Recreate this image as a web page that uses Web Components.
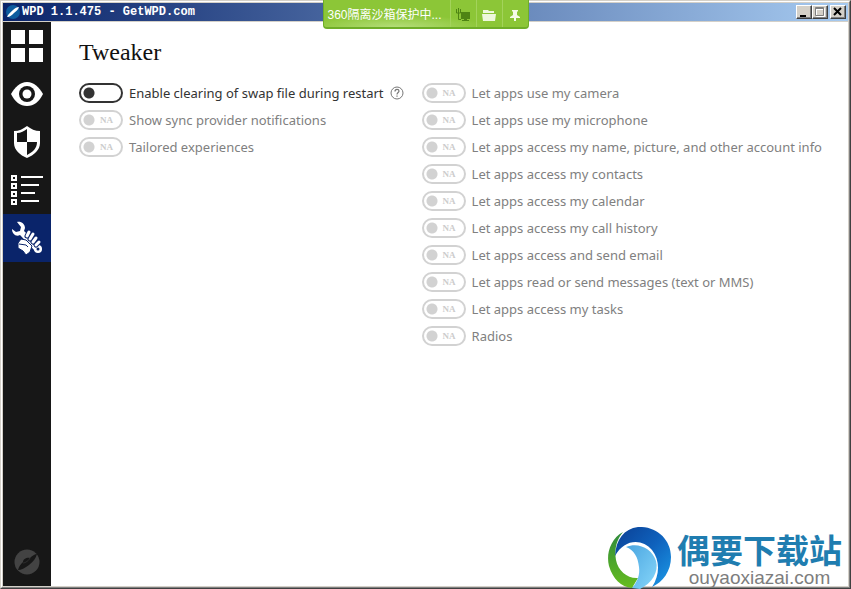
<!DOCTYPE html>
<html lang="en">
<head>
<meta charset="utf-8">
<title>WPD 1.1.475 - GetWPD.com</title>
<style>
  html, body {
    height: 100%;
    margin: 0;
  }
  body {
    font-family: "Noto Sans", "Noto Sans CJK SC", sans-serif;
    font-size: 13px;
    overflow: hidden;
  }
</style>
</head>
<body>

<wpd-window>
  <title-bar slot="title">WPD 1.1.475 - GetWPD.com</title-bar>
  <sandbox-badge slot="badge">360隔离沙箱保护中...</sandbox-badge>
  <nav-rail slot="nav"></nav-rail>
  <tweaker-page>
    <tweak-toggle slot="system" help>Enable clearing of swap file during restart</tweak-toggle>
    <tweak-toggle slot="system" disabled>Show sync provider notifications</tweak-toggle>
    <tweak-toggle slot="system" disabled>Tailored experiences</tweak-toggle>

    <tweak-toggle slot="apps" disabled>Let apps use my camera</tweak-toggle>
    <tweak-toggle slot="apps" disabled>Let apps use my microphone</tweak-toggle>
    <tweak-toggle slot="apps" disabled>Let apps access my name, picture, and other account info</tweak-toggle>
    <tweak-toggle slot="apps" disabled>Let apps access my contacts</tweak-toggle>
    <tweak-toggle slot="apps" disabled>Let apps access my calendar</tweak-toggle>
    <tweak-toggle slot="apps" disabled>Let apps access my call history</tweak-toggle>
    <tweak-toggle slot="apps" disabled>Let apps access and send email</tweak-toggle>
    <tweak-toggle slot="apps" disabled>Let apps read or send messages (text or MMS)</tweak-toggle>
    <tweak-toggle slot="apps" disabled>Let apps access my tasks</tweak-toggle>
    <tweak-toggle slot="apps" disabled>Radios</tweak-toggle>
  </tweaker-page>
  <site-mark slot="mark"></site-mark>
</wpd-window>

<script>
// small helper, every element clones its own template
function attach(host, html) {
  const template = document.createElement('template');
  template.innerHTML = html;
  const root = host.attachShadow({ mode: 'open' });
  root.append(template.content.cloneNode(true));
  return root;
}

/* WINDOW FRAME */
class WpdWindow extends HTMLElement {
  constructor() {
    super();
    attach(this, /*html*/`
      <style>
        :host {
          display: block;
          position: relative;
          height: 100%;
          box-sizing: border-box;
          border: 1px solid;
          border-color: #d4d0c8 #404040 #404040 #d4d0c8;
        }
        .frame {
          display: flex;
          flex-direction: column;
          height: 100%;
          box-sizing: border-box;
          padding: 1px;
          background: #d4d0c8;
          border: 1px solid;
          border-color: #fff #808080 #808080 #fff;
        }
        .body {
          flex: 1;
          display: flex;
          min-height: 0;
          margin-top: 1px;
          background: #fff;
        }
      </style>
      <div class="frame">
        <slot name="title"></slot>
        <div class="body">
          <slot name="nav"></slot>
          <slot></slot>
        </div>
      </div>
      <slot name="badge"></slot>
      <slot name="mark"></slot>
    `);
  }
}

/* TITLE BAR */
class TitleBar extends HTMLElement {
  constructor() {
    super();
    attach(this, /*html*/`
      <style>
        :host {
          display: flex;
          align-items: center;
          height: 18px;
          padding: 0 2px 0 3px;
          background: linear-gradient(to right, #0a246a, #a6caf0);
          color: #fff;
          font: bold 12px/18px "Liberation Mono", monospace;
        }
        .logo {
          width: 14px;
          height: 16px;
          margin-right: 2px;
        }
        .text {
          flex: 1;
          white-space: nowrap;
        }
        button {
          width: 16px;
          height: 14px;
          padding: 0;
          background: #d4d0c8;
          border: 1px solid;
          border-color: #fff #404040 #404040 #fff;
          box-shadow: inset -1px -1px #808080;
        }
        button svg {
          display: block;
        }
        .close {
          margin-left: 2px;
        }
      </style>
      <svg class="logo" viewBox="0 0 14 16">
        <circle cx="7" cy="8" r="7" fill="#0d5c9e"/>
        <path d="M1 13C2 10 5 8 7 6c2-2 4-3 6-3-1 3-3 4-5 6-2 2-4 4-7 4z" fill="#fff"/>
      </svg>
      <span class="text"><slot></slot></span>
      <button aria-label="Minimize"><svg width="14" height="12"><path d="M3 9h6v2H3z"/></svg></button>
      <button aria-label="Maximize" disabled><svg width="14" height="12" fill="none"><path d="M3.500 2.500h8v8h-8zM3 3.500h9" stroke="#fff"/><path d="M2.500 1.500h8v8h-8zM2 2.500h9" stroke="#808080"/></svg></button>
      <button class="close" aria-label="Close"><svg width="14" height="12"><path d="M3 2l7 7M10 2L3 9" stroke="#000" stroke-width="2"/></svg></button>
    `);
  }
}

/* SANDBOX BADGE, sits over the title bar */
class SandboxBadge extends HTMLElement {
  constructor() {
    super();
    attach(this, /*html*/`
      <style>
        :host {
          position: absolute;
          top: -1px;
          left: 50%;
          transform: translateX(-50%);
          display: flex;
          height: 29px;
          box-sizing: border-box;
          border: 1px solid #6fae28;
          border-top: 0;
          border-bottom-width: 2px;
          border-radius: 0 0 4px 4px;
          background: radial-gradient(ellipse 90px 12px at 35% 100%, #b4dd78, #8cc637);
          color: #fff;
          font: 12px/30px "Liberation Sans", "Noto Sans CJK SC", sans-serif;
          overflow: hidden;
        }
        .text {
          width: 122px;
          padding-left: 4px;
          white-space: nowrap;
        }
        button {
          display: grid;
          place-items: center;
          width: 26px;
          padding: 2px 0 0;
          border: 0;
          border-left: 1px solid #a3d35b;
          background: none;
        }
      </style>
      <span class="text"><slot></slot></span>
      <button aria-label="Desktop"><svg width="14" height="14" fill="#4e8413"><path d="M5 4h9v7H5zM8 11h3v1h2v1H6v-1h2z"/><path d="M.5 1v4h4V1M2.500 0v11.500H5" fill="none" stroke="#4e8413"/></svg></button>
      <button aria-label="Folder"><svg width="14" height="14" fill="#eef8dc"><path d="M1 2h5l1 1h5v2H1zM0 6h14l-1 7H1z"/></svg></button>
      <button aria-label="Pin"><svg width="12" height="14" fill="#f4fbe8"><path d="M3 2h6v1L8 4v3l3 2v1H7v3H5v-3H1V9l3-2V4L3 3z"/></svg></button>
    `);
  }
}

/* NAVIGATION */
class NavRail extends HTMLElement {
  constructor() {
    super();
    attach(this, /*html*/`
      <style>
        :host {
          display: block;
          flex: none;
          background: #171717;
        }
        nav {
          display: flex;
          flex-direction: column;
          height: 100%;
        }
        button {
          width: 48px;
          height: 48px;
          padding: 0;
          border: 0;
          background: none;
          color: #fff;
        }
        button.active {
          background: #0a246a;
        }
        button.about {
          margin-top: auto;
        }
        svg {
          display: block;
          width: 48px;
          height: 48px;
          fill: currentColor;
        }
      </style>
      <nav>
        <button aria-label="Dashboard">
          <svg viewBox="0 0 48 48"><path d="M8 8h14v14H8zM26 8h14v14H26zM8 26h14v14H8zM26 26h14v14H26z"/></svg>
        </button>
        <button aria-label="Privacy">
          <svg viewBox="0 0 48 48">
            <path d="M8 24C12 17 17 12 24 12s12 5 16 12c-4 8-9 12-16 12S12 32 8 24z"/>
            <circle cx="24" cy="24" r="8" fill="#171717"/><circle cx="24" cy="24" r="4.500"/>
          </svg>
        </button>
        <button aria-label="Firewall">
          <svg viewBox="0 0 48 48">
            <path d="M24 8c4 3 8 5 13 5v12c0 7-6 12-13 15-7-3-13-8-13-15V13c5 0 9-2 13-5z"/>
            <path d="M24 11v13H14V15c4 0 7-2 10-4zM24 24h10c0 6-4 10-10 13z" fill="#171717"/>
          </svg>
        </button>
        <button aria-label="Apps">
          <svg viewBox="0 0 48 48">
            <path d="M9 10h4v4H9zM9 18h4v4H9zM9 26h4v4H9zM9 34h4v4H9zM18 11h22M18 19h18M18 27h14M18 35h18" fill="none" stroke="currentColor" stroke-width="2"/>
          </svg>
        </button>
        <button class="active" aria-label="Tweaker">
          <svg viewBox="0 0 48 48">
            <path d="M14 8c4-1 8 2 8 6l-1 3 16 15c4 4-1 9-5 5L17 21c-4 2-8-1-8-6l4 3 4-1 1-4z"/>
            <circle cx="35" cy="35" r="4"/><circle cx="35" cy="35" r="1.500" fill="#0a246a"/>
            <g fill="none" stroke="#0a246a" stroke-width="5" stroke-linecap="round"><path d="M26 18l-2 4M30 20l-3 5M33 24l-3 4M36 28l-3 3"/></g>
            <g fill="none" stroke="currentColor" stroke-width="3" stroke-linecap="round"><path d="M26 18l-2 4M30 20l-3 5M33 24l-3 4M36 28l-3 3"/></g>
            <path d="M15 29l3-4 5 1 6 6-2 6-4 3-3-4-5-3z" stroke="#0a246a"/>
            <path d="M16 30l7 1 2 2" fill="none" stroke="#0a246a"/>
          </svg>
        </button>
        <button class="about" aria-label="About">
          <svg viewBox="0 0 48 48">
            <circle cx="24" cy="24" r="12.500" fill="#434343"/>
            <path d="M15 32c1-4 3-6 5-8 0-3 4-5 7-4 2-2 5-4 7-4-1 4-4 8-8 11-4 3-8 5-11 5z" fill="#171717"/>
            <path d="M20 25c1 0 5-1 7-5" fill="none" stroke="#303030"/>
          </svg>
        </button>
      </nav>
    `);
  }
}

/* PAGE */
class TweakerPage extends HTMLElement {
  constructor() {
    super();
    attach(this, /*html*/`
      <style>
        :host {
          display: block;
          flex: 1;
          min-width: 0;
          padding: 14px 12px 14px 28px;
        }
        h1 {
          margin: 0 0 15px;
          color: #111;
          font: 24px/32px "Liberation Serif", serif;
        }
        .columns {
          display: flex;
          gap: 18px;
        }
        .column {
          display: flex;
          flex-direction: column;
          gap: 7px;
        }
      </style>
      <h1>Tweaker</h1>
      <div class="columns">
        <div class="column"><slot name="system"></slot></div>
        <div class="column"><slot name="apps"></slot></div>
      </div>
    `);
  }
}

/* TOGGLE ROW */
class TweakToggle extends HTMLElement {
  constructor() {
    super();
    const root = attach(this, /*html*/`
      <style>
        :host {
          display: flex;
          align-items: center;
          height: 20px;
          color: #333;
          white-space: nowrap;
          --line: #333;
        }
        :host([disabled]) {
          color: #808080;
          --line: #d2d2d2;
        }
        label {
          display: flex;
          align-items: center;
          gap: 6px;
          line-height: 20px;
        }
        .switch {
          display: grid;
          align-items: center;
          width: 44px;
          height: 20px;
        }
        input, .na {
          grid-area: 1 / 1;
        }
        input {
          appearance: none;
          width: 44px;
          height: 20px;
          margin: 0;
          border: 2px solid var(--line);
          border-radius: 10px;
          background: radial-gradient(circle at 8px 8px, var(--line) 5px, transparent 6px);
        }
        input:checked {
          background: radial-gradient(circle at 32px 8px, var(--line) 5px, transparent 6px);
        }
        .na {
          justify-self: end;
          padding-right: 10px;
          color: #ccc;
          font: bold 9px/20px "Liberation Serif", serif;
        }
        .help {
          width: 14px;
          height: 14px;
          margin-left: 6px;
          padding: 0;
          border: 0;
          background: none;
        }
        .help svg {
          display: block;
        }
      </style>
      <label>
        <span class="switch"><input type="checkbox" role="switch"></span>
        <span><slot></slot></span>
      </label>
    `);

    if (this.hasAttribute('disabled')) {
      root.querySelector('input').disabled = true;
      const na = document.createElement('span');
      na.className = 'na';
      na.textContent = 'NA';
      root.querySelector('.switch').append(na);
    }

    if (this.hasAttribute('help')) {
      const help = document.createElement('button');
      help.className = 'help';
      help.setAttribute('aria-label', 'Help');
      help.innerHTML = `<svg width="14" height="14" fill="none" stroke="#777">
        <circle cx="7" cy="7" r="6"/>
        <path d="M5 5.500c0-3 4-2.500 4-.5 0 1.500-2 1.500-2 3.500M7 9.500v1.200" stroke-width="1.200"/>
      </svg>`;
      root.append(help);
    }
  }
}

/* SITE MARK, floats over the bottom right corner */
class SiteMark extends HTMLElement {
  constructor() {
    super();
    attach(this, /*html*/`
      <style>
        :host {
          position: absolute;
          right: 8px;
          bottom: -1px;
          display: flex;
          align-items: flex-end;
          gap: 4px;
        }
        svg {
          width: 65px;
          height: 62px;
        }
        .text {
          display: flex;
          flex-direction: column;
          align-items: center;
          white-space: nowrap;
        }
        .name {
          color: #1f7db0;
          font: bold 33px/36px "Noto Sans CJK SC", sans-serif;
        }
        .domain {
          color: #7d7d7d;
          font: 19px/22px "Liberation Sans", sans-serif;
        }
      </style>
      <svg viewBox="0 0 65 62">
        <defs>
          <linearGradient id="blue" x1="0" y1="0" x2="1" y2="1">
            <stop offset="0" stop-color="#0a3f94"/><stop offset=".5" stop-color="#0f62bd"/><stop offset="1" stop-color="#1c9be8"/>
          </linearGradient>
          <linearGradient id="green" x1="0" y1="0" x2="0" y2="1">
            <stop offset="0" stop-color="#2f8a3c"/><stop offset="1" stop-color="#66bd1e"/>
          </linearGradient>
          <linearGradient id="sky" x1="0" y1="0" x2="1" y2="1">
            <stop offset="0" stop-color="#4aa5e0"/><stop offset="1" stop-color="#86d6fa"/>
          </linearGradient>
        </defs>
        <path d="M15 5C2 12-2 28 1 39c4 13 12 21 23 22l6-10C20 52 10 44 8 33 6 22 9 12 15 5z" fill="url(#green)"/>
        <path d="M7 29C8 12 16 2 30 0c18-1 33 12 33 30 0 14-8 25-19 30 8-12 8-27 0-37C34 11 16 12 7 29z" fill="url(#blue)"/>
        <path d="M18 20c13-5 26 2 30 14 3 11-4 22-16 28l-8-1c6-7 8-14 7-21-1-10-5-17-13-20z" fill="url(#sky)"/>
      </svg>
      <div class="text">
        <span class="name">偶要下载站</span>
        <span class="domain">ouyaoxiazai.com</span>
      </div>
    `);
  }
}

customElements.define('wpd-window', WpdWindow);
customElements.define('title-bar', TitleBar);
customElements.define('sandbox-badge', SandboxBadge);
customElements.define('nav-rail', NavRail);
customElements.define('tweaker-page', TweakerPage);
customElements.define('tweak-toggle', TweakToggle);
customElements.define('site-mark', SiteMark);
</script>
</body>
</html>
